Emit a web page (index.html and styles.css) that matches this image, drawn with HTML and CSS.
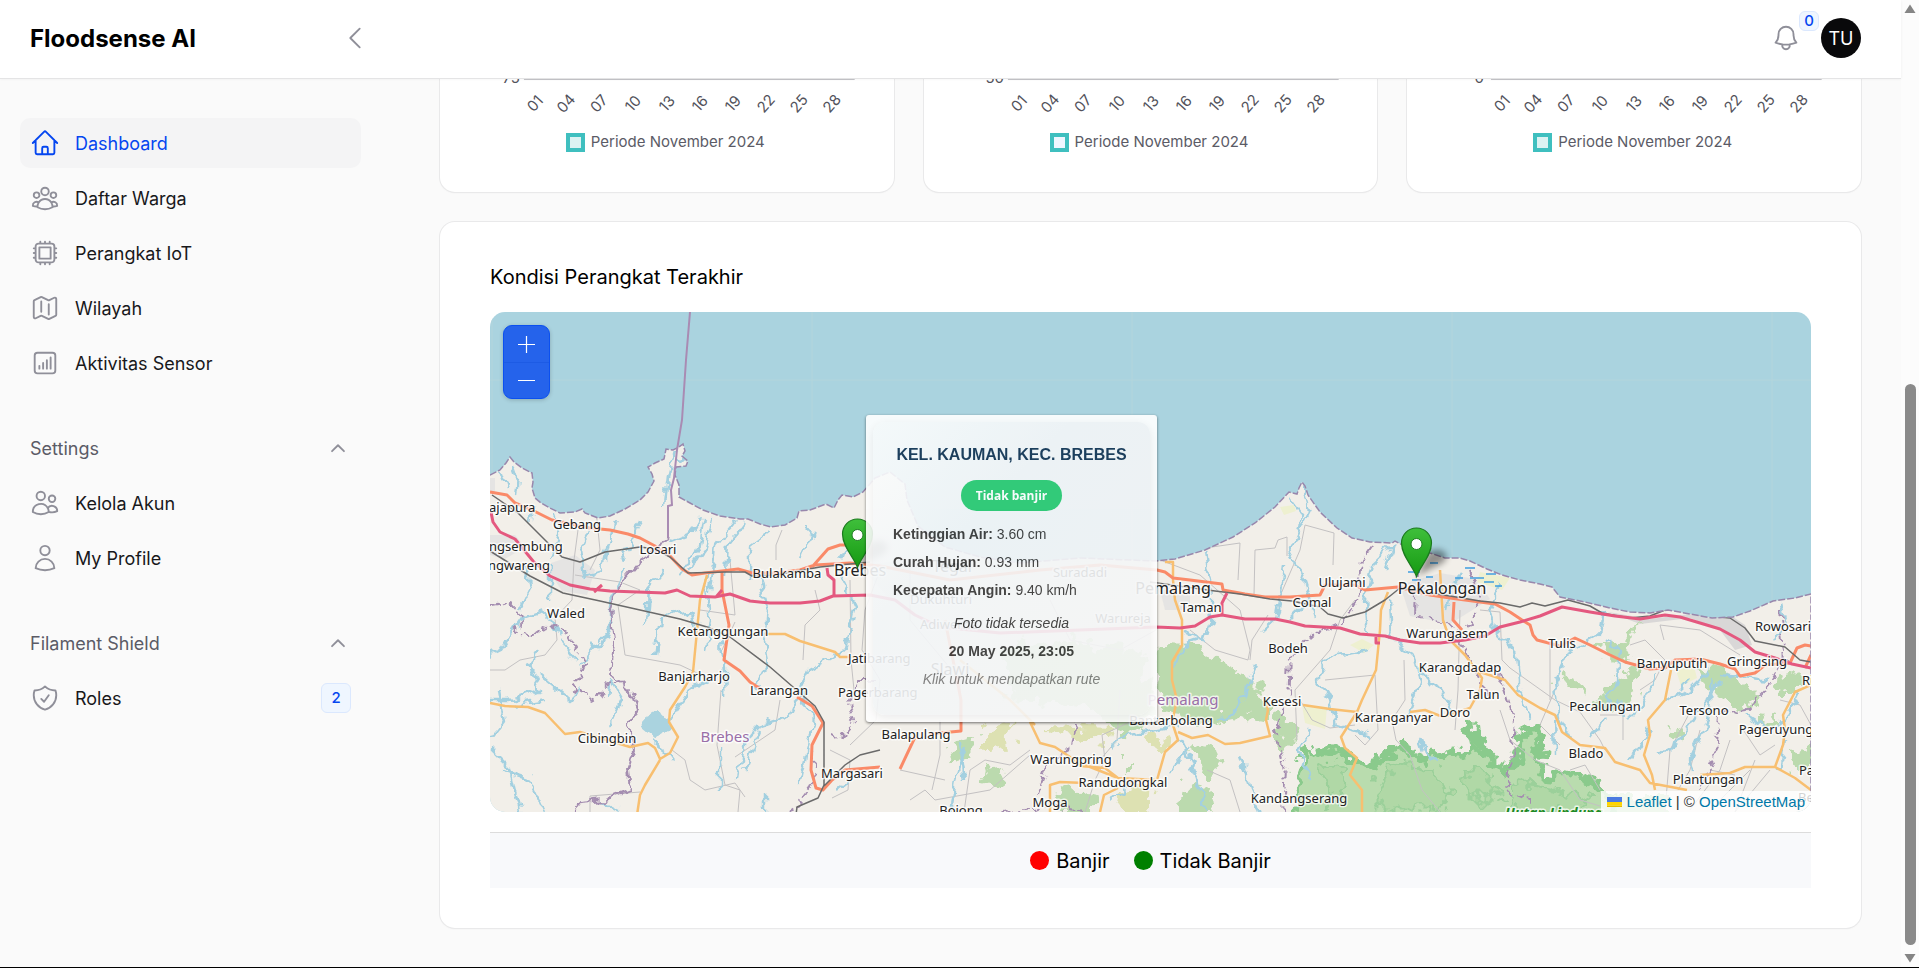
FILE: index.html
```html
<!DOCTYPE html>
<html lang="id">
<head>
<meta charset="utf-8">
<title>Dashboard - Floodsense AI</title>
<link rel="stylesheet" href="styles.css">
</head>
<body>
<svg class="defs" aria-hidden="true">
  <symbol id="i-home" viewBox="0 0 24 24"><path d="m2.25 12 8.954-8.955c.44-.439 1.152-.439 1.591 0L21.75 12M4.5 9.75v10.125c0 .621.504 1.125 1.125 1.125H9.75v-4.875c0-.621.504-1.125 1.125-1.125h2.25c.621 0 1.125.504 1.125 1.125V21h4.125c.621 0 1.125-.504 1.125-1.125V9.75M8.25 21h8.25"/></symbol>
  <symbol id="i-group" viewBox="0 0 24 24"><path d="M18 18.72a9.094 9.094 0 0 0 3.741-.479 3 3 0 0 0-4.682-2.72m.94 3.198.001.031c0 .225-.012.447-.037.666A11.944 11.944 0 0 1 12 21c-2.17 0-4.207-.576-5.963-1.584A6.062 6.062 0 0 1 6 18.719m12 0a5.971 5.971 0 0 0-.941-3.197m0 0A5.995 5.995 0 0 0 12 12.75a5.995 5.995 0 0 0-5.058 2.772m0 0a3 3 0 0 0-4.681 2.72 8.986 8.986 0 0 0 3.74.477m.94-3.197a5.971 5.971 0 0 0-.94 3.197M15 6.75a3 3 0 1 1-6 0 3 3 0 0 1 6 0Zm6 3a2.25 2.25 0 1 1-4.5 0 2.25 2.25 0 0 1 4.5 0Zm-13.5 0a2.25 2.25 0 1 1-4.5 0 2.25 2.25 0 0 1 4.5 0Z"/></symbol>
  <symbol id="i-cpu" viewBox="0 0 24 24"><path d="M8.25 3v1.5M4.5 8.25H3m18 0h-1.5M4.5 12H3m18 0h-1.5m-15 3.75H3m18 0h-1.5M8.25 19.5V21M12 3v1.5m0 15V21m3.75-18v1.5m0 15V21m-9-1.5h10.5a2.25 2.25 0 0 0 2.25-2.25V6.75a2.25 2.25 0 0 0-2.25-2.25H6.75A2.25 2.25 0 0 0 4.5 6.75v10.5a2.25 2.25 0 0 0 2.25 2.25Zm.75-12h9v9h-9v-9Z"/></symbol>
  <symbol id="i-map" viewBox="0 0 24 24"><path d="M9 6.75V15m6-6v8.25m.503 3.498 4.875-2.437c.381-.19.622-.58.622-1.006V4.82c0-.836-.88-1.38-1.628-1.006l-3.869 1.934c-.317.159-.69.159-1.006 0L9.503 3.252a1.125 1.125 0 0 0-1.006 0L3.622 5.689C3.24 5.88 3 6.27 3 6.695V19.18c0 .836.88 1.38 1.628 1.006l3.869-1.934c.317-.159.69-.159 1.006 0l4.994 2.497c.317.158.69.158 1.006 0Z"/></symbol>
  <symbol id="i-chart" viewBox="0 0 24 24"><path d="M7.5 14.25v2.25m3-4.5v4.5m3-6.75v6.75m3-9v9M6 20.25h12A2.25 2.25 0 0 0 20.25 18V6A2.25 2.25 0 0 0 18 3.75H6A2.25 2.25 0 0 0 3.75 6v12A2.25 2.25 0 0 0 6 20.25Z"/></symbol>
  <symbol id="i-users" viewBox="0 0 24 24"><path d="M15 19.128a9.38 9.38 0 0 0 2.625.372 9.337 9.337 0 0 0 4.121-.952 4.125 4.125 0 0 0-7.533-2.493M15 19.128v-.003c0-1.113-.285-2.16-.786-3.07M15 19.128v.106A12.318 12.318 0 0 1 8.624 21c-2.331 0-4.512-.645-6.374-1.766l-.001-.109a6.375 6.375 0 0 1 11.964-3.07M12 6.375a3.375 3.375 0 1 1-6.75 0 3.375 3.375 0 0 1 6.75 0Zm8.25 2.25a2.625 2.625 0 1 1-5.25 0 2.625 2.625 0 0 1 5.25 0Z"/></symbol>
  <symbol id="i-user" viewBox="0 0 24 24"><path d="M15.75 6a3.75 3.75 0 1 1-7.5 0 3.75 3.75 0 0 1 7.5 0ZM4.501 20.118a7.5 7.5 0 0 1 14.998 0A17.933 17.933 0 0 1 12 21.75c-2.676 0-5.216-.584-7.499-1.632Z"/></symbol>
  <symbol id="i-shield" viewBox="0 0 24 24"><path d="M9 12.75 11.25 15 15 9.75m-3-7.036A11.959 11.959 0 0 1 3.598 6 11.99 11.99 0 0 0 3 9.749c0 5.592 3.824 10.29 9 11.623 5.176-1.332 9-6.03 9-11.622 0-1.31-.21-2.571-.598-3.751h-.152c-3.196 0-6.1-1.248-8.25-3.285Z"/></symbol>
  <symbol id="i-bell" viewBox="0 0 24 24"><path d="M14.857 17.082a23.848 23.848 0 0 0 5.454-1.31A8.967 8.967 0 0 1 18 9.75V9A6 6 0 0 0 6 9v.75a8.967 8.967 0 0 1-2.312 6.022c1.733.64 3.56 1.085 5.455 1.31m5.714 0a24.255 24.255 0 0 1-5.714 0m5.714 0a3 3 0 1 1-5.714 0"/></symbol>
  <symbol id="i-left" viewBox="0 0 24 24"><path d="M15.75 19.5 8.25 12l7.5-7.5"/></symbol>
  <symbol id="i-up" viewBox="0 0 24 24"><path d="m5.5 15.5 6.5-6.5 6.5 6.5"/></symbol>
  <symbol id="axis" viewBox="0 0 454 48" overflow="hidden">
    <path d="M84 .5H415" stroke="#c4c4c8"/>
    <g class="axis-text" text-anchor="middle">
      <text transform="translate(99 28) rotate(-48)">01</text>
      <text transform="translate(130 28) rotate(-48)">04</text>
      <text transform="translate(163 28) rotate(-48)">07</text>
      <text transform="translate(197 28) rotate(-48)">10</text>
      <text transform="translate(231 28) rotate(-48)">13</text>
      <text transform="translate(264 28) rotate(-48)">16</text>
      <text transform="translate(297 28) rotate(-48)">19</text>
      <text transform="translate(330 28) rotate(-48)">22</text>
      <text transform="translate(363 28) rotate(-48)">25</text>
      <text transform="translate(396 28) rotate(-48)">28</text>
    </g>
  </symbol>
  <linearGradient id="pin-fill" x1="0" y1="0" x2="0" y2="1"><stop offset="0" stop-color="#3fbf3b"/><stop offset="1" stop-color="#169a12"/></linearGradient>
  <filter id="soft" x="-50%" y="-50%" width="200%" height="200%"><feGaussianBlur stdDeviation="3"/></filter>
  <symbol id="pin" viewBox="0 0 60 52" overflow="visible">
    <path d="M17 49 28 25q12-6 18 2 3 8-12 13Z" fill="#000" opacity=".4" filter="url(#soft)"/>
    <path d="M16.500 49.500C13.500 40 1.500 29 1.500 16a14.500 14.500 0 0 1 30 0c0 13-12 24-15 33.500Z" fill="url(#pin-fill)" stroke="#1b7a1e" stroke-width="1.200"/>
    <circle cx="16.500" cy="17" r="5.500" fill="#fff" stroke="#1f7d22"/>
  </symbol>
</svg>

<div class="window">
  <div class="page">
    <header class="topbar">
      <div class="brand-area">
        <a class="brand" href="#">Floodsense AI</a>
        <button class="icon-button" type="button" aria-label="Tutup sidebar"><svg class="icon"><use href="#i-left"/></svg></button>
      </div>
      <div class="user-area">
        <button class="icon-button bell" type="button" aria-label="Notifikasi"><svg class="icon"><use href="#i-bell"/></svg><span class="count">0</span></button>
        <button class="avatar" type="button">TU</button>
      </div>
    </header>

    <div class="body">
      <nav class="sidebar">
        <ul class="group">
          <li><a class="item active" href="#"><svg class="icon"><use href="#i-home"/></svg>Dashboard</a></li>
          <li><a class="item" href="#"><svg class="icon"><use href="#i-group"/></svg>Daftar Warga</a></li>
          <li><a class="item" href="#"><svg class="icon"><use href="#i-cpu"/></svg>Perangkat IoT</a></li>
          <li><a class="item" href="#"><svg class="icon"><use href="#i-map"/></svg>Wilayah</a></li>
          <li><a class="item" href="#"><svg class="icon"><use href="#i-chart"/></svg>Aktivitas Sensor</a></li>
        </ul>
        <ul class="group">
          <li><button class="group-head" type="button">Settings<svg class="icon small"><use href="#i-up"/></svg></button></li>
          <li><a class="item" href="#"><svg class="icon"><use href="#i-users"/></svg>Kelola Akun</a></li>
          <li><a class="item" href="#"><svg class="icon"><use href="#i-user"/></svg>My Profile</a></li>
        </ul>
        <ul class="group">
          <li><button class="group-head" type="button">Filament Shield<svg class="icon small"><use href="#i-up"/></svg></button></li>
          <li><a class="item" href="#"><svg class="icon"><use href="#i-shield"/></svg>Roles<span class="item-badge">2</span></a></li>
        </ul>
      </nav>

      <main class="main">
        <div class="charts">
          <section class="card chart">
            <svg class="axis" viewBox="0 0 454 48"><use href="#axis"/><text class="axis-text" x="80" y="4" text-anchor="end">75</text></svg>
            <p class="series"><span class="swatch"></span>Periode November 2024</p>
          </section>
          <section class="card chart">
            <svg class="axis" viewBox="0 0 454 48"><use href="#axis"/><text class="axis-text" x="80" y="4" text-anchor="end">50</text></svg>
            <p class="series"><span class="swatch pale"></span>Periode November 2024</p>
          </section>
          <section class="card chart">
            <svg class="axis" viewBox="0 0 454 48"><use href="#axis"/><text class="axis-text" x="77" y="4" text-anchor="end">0</text></svg>
            <p class="series"><span class="swatch"></span>Periode November 2024</p>
          </section>
        </div>

        <section class="card map-card">
          <h2 class="map-title">Kondisi Perangkat Terakhir</h2>
          <div class="map">
            <svg class="map-canvas" viewBox="490 312 1321 500" preserveAspectRatio="xMidYMid slice" role="img" aria-label="Peta pantai utara Jawa Tengah">
              <defs>
                <filter id="wiggle" filterUnits="userSpaceOnUse" x="480" y="300" width="1345" height="525"><feTurbulence type="fractalNoise" baseFrequency=".09" numOctaves="2" seed="4"/><feDisplacementMap in="SourceGraphic" scale="13" xChannelSelector="R" yChannelSelector="G"/></filter>
                <filter id="ragged" filterUnits="userSpaceOnUse" x="480" y="300" width="1345" height="535"><feTurbulence type="fractalNoise" baseFrequency=".07" numOctaves="3" seed="9"/><feDisplacementMap in="SourceGraphic" scale="30" xChannelSelector="R" yChannelSelector="G"/></filter>
                <path id="land" d="M490 475 500 470 506 463 510 457 514 462 522 468 532 473 533 482 532 488 535 498 541 503 550 508 560 513 575 512 582 509 585 513 598 518 610 516 625 509 640 500 648 492 654 481 652 474 648 467 655 463 664 459 666 449 673 450 679 447 683 444 685 451 682 456 688 461 686 466 676 467 675 475 679 485 679 497 690 503 703 510 720 516 740 519 748 519 760 524 771 527 785 525 797 518 799 511 810 510 826 504 834 508 838 500 842 495 853 497 863 492 875 478 890 472 905 484 907 500 918 526 945 547 980 557 1020 563 1080 558 1156 561 1175 559 1205 550 1233 537 1255 523 1275 507 1289 492 1297 494 1299 488 1302 482 1305 486 1308 495 1320 512 1337 528 1352 538 1370 542 1392 543 1395 541 1410 549 1430 553 1445 558 1460 558 1470 561 1487 569 1502 575 1520 580 1540 584 1552 587 1560 597 1585 602 1610 608 1630 612 1650 613 1668 610 1690 614 1712 618 1733 617 1750 611 1773 601 1795 598 1811 594V830H480V475Z"/>
                <clipPath id="on-land"><use href="#land"/></clipPath>
              </defs>
              <path class="sea" d="M480 300h1350v530H480z"/>
              <path class="tile" d="M492 312V500M812 312V520M1132 312V560M1452 312V560M1772 312V600M490 380H1811"/>
              <use href="#land" class="land"/>
              <g clip-path="url(#on-land)">
                <path class="built" d="M490 478h5v16h-5zM545 565l30-10 20 15-8 25-25-4zM490 535h25l10 12-20 12-15-4zM860 565l50-5 20 20-40 20zM1160 590h30v20h-25zM1400 585l40-12 35 6 15 20-40 25-40-8z"/>
                <path class="industry" d="M1608 612 1650 619 1690 614 1733 617 1745 625 1752 645 1735 650 1720 630 1690 618 1640 624Z"/>
                <path class="sand" d="M1280 507l14-2 2 6-12 4zM1302 705l25 2-2 22-20-6zM1350 645l12-6 12 6-10 8zM1676 670l18-4 3 12-16 8zM1480 572l30 6-8 12-25-8z"/>
                <g class="wood" filter="url(#ragged)">
                  <path d="M1160 644 1198 645 1215 660 1250 678 1268 696 1268 722 1235 718 1195 722 1165 705 1155 680Z"/>
                  <path d="M1275 715 1300 727 1296 742 1286 752 1278 735ZM1180 790 1210 782 1215 815H1175ZM1192 748 1215 752 1220 772 1205 768ZM1056 790 1085 786 1100 797 1090 815H1060ZM952 742 975 736 970 758 955 762ZM985 768 1000 765 1005 795 990 790ZM1122 762h12v14h-12z"/>
                  <path d="M1600 645 1625 640 1640 620 1632 645 1625 662 1608 660ZM1605 685 1640 665 1635 700 1610 710 1588 705 1602 695ZM1560 678 1575 675 1585 695 1565 690ZM1695 665 1720 668 1750 690 1760 700 1735 710 1715 690ZM1775 680 1800 672V690H1780ZM1760 715 1780 718V730L1760 722ZM1790 750 1811 745V770H1795ZM1668 730l14-3-4 15zM1608 795h60v22h-60z"/>
                  <path d="M1000 650 1060 640 1140 650 1157 720 1130 735 1080 705 1010 700Z"/>
                </g>
                <path class="scrub" filter="url(#ragged)" d="M985 730 1010 722 1012 745 985 748ZM1045 725 1115 727 1110 740 1060 738ZM1122 790 1150 782 1148 815H1120ZM1150 740 1172 735 1170 748 1152 748Z"/>
                <g filter="url(#ragged)">
                  <path class="forest" d="M1304 750 1318 755 1335 750 1350 758 1366 764 1388 758 1398 746 1412 754 1430 758 1452 754 1466 750 1482 752 1496 760 1504 768 1518 758 1524 728 1534 728 1542 748 1540 772 1566 774 1590 784 1614 796 1618 830H1300L1298 780Z"/>
                  <path class="forest-core" d="M1320 766 1340 762 1352 784 1335 806ZM1380 778 1400 764 1430 770 1450 790 1440 812 1380 812ZM1462 770 1490 776 1500 800 1470 800ZM1512 785 1550 788 1590 800 1560 815 1510 812Z"/>
                  <path class="forest" d="M1462 724 1478 738 1490 752 1478 750Z"/>
                </g>
                <g class="minor">
                  <path d="M490 670 505 670 520 660 545 655 557 640 555 618 572 600 574 560 578 530M596 510 600 550 590 570M575 575 620 582 640 590 618 605 625 655 680 665 712 680M721 690 717 745 725 785 740 790 738 812M672 750 685 760 690 780 705 790 735 783 745 797M590 812V796L640 792M735 622 722 650M850 580 851 660 855 700M830 750 850 760 848 790 832 798M780 700 775 730 735 757M803 660 805 625 820 610 815 590M700 610 735 615 730 560M776 560V545L782 530M880 570 865 610 862 650 880 680 876 720 850 745M910 560V620L960 680V720M1050 600 1070 640 1120 650 1156 630"/>
                  <path d="M1205 548 1240 543 1238 580M1254 595 1255 550 1275 548 1278 540 1287 537V556M1280 596 1300 550 1305 525 1334 533 1333 565M1160 560 1200 575 1240 610 1250 650 1248 660 1215 650 1190 630M1250 660 1252 640 1268 615M1297 740 1295 690 1330 650 1340 620 1355 600M1325 680 1375 675 1378 730 1365 745 1355 735M1404 660 1405 700 1392 720 1396 740 1410 755 1422 790 1440 812M1460 610 1458 690 1455 730M1300 700 1312 720 1330 728 1355 725M1207 770 1230 780 1240 812M1085 812 1095 780 1105 760 1102 735 1130 722M940 720V755L932 790M900 770 945 780M964 812 970 770 985 760 1010 765 1030 750M910 800 925 790 935 800 990 790 1030 755M1120 690 1117 740 1100 760"/>
                  <path d="M1480 610 1500 612 1502 660 1510 668 1555 700 1580 712 1600 740 1605 750M1550 640V700M1600 715H1623V740M1500 710 1510 740 1535 760 1560 770 1580 800 1600 806M1664 640 1660 625 1700 630 1740 655M1630 645 1645 640 1665 660 1655 680 1640 690M1690 712 1670 750 1665 812M1700 730 1690 770 1678 790M1730 740 1720 770 1690 810M1755 760 1735 812M1780 700 1800 705 1811 725M1740 725 1760 755 1775 745M1710 770 1735 775M1720 800 1750 770M1735 812 1770 770M1570 770 1585 765 1600 790M1555 690 1540 725 1560 745"/>
                </g>
                <g class="river" filter="url(#wiggle)">
                  <path d="M513 465 518 480 516 495M500 470 507 490M535 505 530 525M551 560 560 530 555 515M585 580 580 550 590 530M605 560 615 520M640 520 632 545 620 560M674 452 668 475 665 505M679 458 689 462M703 515 695 530 670 540M705 518 700 545 680 575M712 520 705 550 690 570M745 522 728 545 726 575M735 520 715 545 710 590M770 530 750 545 750 580M815 530 805 545 800 560M804 525 815 537M850 545 840 560M606 545 600 570 585 575"/>
                  <path d="M520 610 530 590 526 565M550 565V600M560 635 545 612 520 620 500 650 490 655M625 570 610 600 610 630 580 665M590 640 600 650 615 620M665 570 648 590 646 625M700 625 680 610 660 620 655 655M705 575 710 620 706 650M760 575 768 610 765 640 768 665 755 690M720 635 725 670 724 695M710 680 690 690 670 720M840 575 855 605 845 650 810 670 800 690 790 715 760 725 745 740 738 780M800 690 815 720 808 740 805 760 800 785M500 760 490 750 510 770 520 812M540 650 530 665 540 690 510 700 490 700M540 675 570 700 580 690M560 640 575 660M500 690 505 720 490 740M607 695 610 680 622 700 610 725M545 700 515 705M500 770 530 780 545 812M600 800 620 810M720 745V790M760 730 745 770M838 790 850 780M765 795V812M652 740 665 750 672 760"/>
                  <path d="M1290 497 1302 513 1300 530 1288 560 1300 570 1310 600 1315 615M1303 485 1310 510 1300 530M1205 552 1210 580 1212 620 1205 640 1180 630M1283 565 1280 595 1275 620 1262 632M1394 545 1372 565 1365 600 1368 635M1393 545 1385 570M1390 630 1405 650 1415 655 1420 680 1410 710 1400 722M1420 670 1440 690 1456 715M1170 670 1185 645 1200 640M1370 650 1340 655 1325 660 1318 680 1330 700 1335 725 1370 735M1310 600 1290 620M1256 665 1245 690 1238 710 1215 720M1310 730 1300 750 1310 780M1420 740 1425 755 1440 760M1460 575 1450 590 1447 610M1500 580 1490 610 1495 630 1515 650 1520 690 1530 720M1390 600 1392 640M1180 740 1190 760 1200 790 1205 812M1240 755 1248 780 1258 812M950 812 955 780 965 745M1112 745 1130 735 1180 725M1170 775 1175 765 1190 748M960 740 965 780M1110 800 1130 785"/>
                  <path d="M1604 610 1600 635 1570 650 1555 680 1560 720 1570 740M1605 640 1620 650 1618 680 1605 710M1655 675 1640 710 1630 720M1650 730 1630 760M1620 700 1625 720M1555 720 1556 755M1720 680 1700 710 1680 740 1660 755M1712 680 1708 720 1690 760 1692 770M1720 675 1770 680M1690 680 1680 690M1780 605 1785 625 1775 640M1800 690 1785 720 1770 730 1745 715M1785 740 1780 770M1665 700 1690 690 1710 670M1590 740 1605 720"/>
                </g>
                <path class="lake" filter="url(#wiggle)" d="M642 718 655 711 672 718 667 730 655 738 643 728Z"/>
                <path class="swamp" d="M1408 572h12M1430 563h8M1442 556h6M1465 568h10M1455 578h8M1470 578h14M1412 580h9M1486 574h10M1484 582h10M1495 586h7M1426 577h7"/>
                <g class="border" filter="url(#wiggle)">
                  <path d="M668 538 660 543 650 556 640 562 625 580 615 590 610 610 615 640 612 675 630 690 637 710 628 725 635 750 628 770 630 790 605 800 580 802 570 815"/>
                  <path d="M490 605 510 602 525 620 515 630 530 638 550 625 570 635 585 665 575 690 595 700 605 685 620 680" stroke-dasharray="8 3"/>
                  <path d="M877 680 860 680 850 700 855 720 840 738 830 735M812 750 815 780 800 800 790 812M1370 548 1362 560 1358 600 1345 620 1310 635 1290 660 1288 700 1275 730 1285 770 1282 812M1418 570 1416 615 1440 620 1460 640 1480 680 1490 700M1500 675 1515 720 1512 760 1505 790 1530 800 1530 815M1780 610 1785 660 1770 685 1745 710 1718 715 1715 760 1700 790M1085 812 1050 805 1000 815M1075 725 1070 750 1050 760 1035 800M1470 570 1480 600 1465 630" stroke-dasharray="8 3"/>
                </g>
                <g class="secondary">
                  <path d="M490 703 505 706 528 707 545 713 565 734 580 732 630 747 648 743 655 748 660 759 670 753 678 737 669 722 670 710 685 687 693 672 700 600 707 575M660 760 645 785 640 795 637 815M765 634 785 634 800 641 835 652 840 657 855 657M1165 562H1173V580L1175 600 1182 620 1182 645 1172 662 1172 680 1177 700 1172 722 1178 740 1165 752 1157 780 1118 778 1085 765M1178 732 1192 738 1208 735 1225 744 1240 743 1270 736 1266 720 1268 710 1265 700M1303 705 1330 709 1357 712 1362 700 1376 670 1380 630 1381 610 1388 592M1357 712 1341 737 1345 748 1357 758 1350 775 1362 790 1362 815M1410 712 1425 710 1443 717 1470 708 1480 690 1482 678 1465 655 1450 640 1443 620 1440 570M1480 672 1505 680 1518 695 1540 708 1555 715 1562 732 1580 745 1605 748 1615 762 1640 770 1650 783 1687 790M1655 790 1652 775 1644 755 1650 735 1648 720 1665 700 1671 670M1700 775 1730 773 1745 767 1775 767 1783 745 1785 730 1783 715 1795 692 1811 685M1775 767 1795 778 1811 790M1050 815V785L1060 782 1085 783M1100 812 1104 795 1118 788M1030 722 1040 743 1055 747 1070 757 1080 766 1105 768 1118 778M960 660 1010 700 1035 725"/>
                </g>
                <g class="trunk">
                  <path d="M490 492 507 495 515 503 532 510 552 520 590 528 610 530 628 534 640 538 655 546 670 556 682 569 692 575 705 573 722 571 738 569 752 573 775 573 800 570 815 565 850 563 880 566M812 567 820 558 828 549 840 545 850 545M722 572V590L729 625 724 660 740 671 750 682 762 690M797 697 812 706 823 723 812 745 811 770 816 788 823 790 832 780 845 770 880 767M900 769 916 735M930 734 961 731V700L945 620M880 566 950 580 1040 570 1100 565 1157 570 1165 572 1173 578 1190 580 1222 584 1223 590 1245 594 1265 597 1290 597 1320 595 1325 585 1355 585 1365 590 1398 587 1430 595 1450 598 1480 602 1495 604 1510 612 1522 620 1530 625 1533 635 1537 640 1560 646 1575 638 1590 645 1610 655 1625 662 1650 669 1665 668 1675 660 1700 659 1720 664 1735 669 1740 676 1755 673 1765 665 1790 663 1797 648 1805 645 1811 646M1805 668 1811 655M1454 602 1453 620 1462 630"/>
                </g>
                <g class="rail">
                  <path d="M492 495 518 513 545 540 562 557 580 562 605 552 640 547 655 549 670 557 688 573 725 572 745 572 752 576 775 575 820 567 870 562M490 551 530 576 563 593 600 601 640 610 680 619 707 627 730 637 770 667 815 706 824 722V785L818 798 797 807 796 815M824 786 845 765 860 755 880 750M1150 582 1215 591 1240 594 1270 599 1292 601 1320 607 1328 614 1343 618 1365 612 1385 600 1400 588 1450 596 1480 601 1500 603 1520 607 1532 603 1545 606 1568 600 1590 606 1602 613 1630 618 1650 616 1670 608 1700 615 1730 618 1745 628 1755 641 1785 647 1800 660 1811 662"/>
                </g>
                <g class="motorway">
                  <path d="M491 512 493 522 500 532 515 539 533 561 550 576 570 585 590 589 610 591 665 593 677 590 690 596 715 597 730 594 750 601 770 603 800 603 820 601 833 596 870 595 895 600 915 615 940 627 1000 633 1080 630 1156 627 1180 628 1195 626 1210 617 1222 615 1245 619 1275 619 1290 622 1305 626 1340 628 1360 634 1385 636 1400 640 1420 643 1440 643 1465 640 1485 636 1500 627 1520 622 1540 616 1562 607 1590 612 1615 616 1640 619 1665 615 1680 617 1700 623 1720 629 1740 640 1755 652 1775 658 1792 664 1811 668M827 568 828 575 834 580V595M594 592 602 585M716 597 722 590M1222 615V603L1227 593M1376 636V643H1380"/>
                </g>
              </g>
              <use href="#land" class="coast"/>
              <path class="sea-border" d="M690 312 686 360 682 420 677 450 674 478 671 490 672 505 668 506V538"/>
              <g class="label">
                <text x="489" y="512">ajapura</text><text x="489" y="551">ngsembung</text><text x="488" y="570">ngwareng</text>
                <g text-anchor="middle">
                  <text x="577" y="529">Gebang</text><text x="658" y="554">Losari</text><text x="787" y="578">Bulakamba</text><text x="566" y="618">Waled</text><text x="723" y="636">Ketanggungan</text><text x="694" y="681">Banjarharjo</text><text x="779" y="695">Larangan</text><text x="607" y="743">Cibingbin</text><text x="852" y="778">Margasari</text><text x="916" y="739">Balapulang</text><text x="1080" y="577">Suradadi</text><text x="941" y="604">Dukuhturi</text><text x="949" y="629">Adiwerna</text><text x="1123" y="623">Warureja</text><text x="1201" y="612">Taman</text><text x="1312" y="607">Comal</text><text x="1342" y="587">Ulujami</text><text x="1447" y="638">Warungasem</text><text x="1288" y="653">Bodeh</text><text x="1460" y="672">Karangdadap</text><text x="1483" y="699">Talun</text><text x="1282" y="706">Kesesi</text><text x="1394" y="722">Karanganyar</text><text x="1455" y="717">Doro</text><text x="1171" y="725">Bantarbolang</text><text x="1123" y="787">Randudongkal</text><text x="1071" y="764">Warungpring</text><text x="1050" y="807">Moga</text><text x="961" y="815">Bojong</text><text x="1299" y="803">Kandangserang</text><text x="1562" y="648">Tulis</text><text x="1672" y="668">Banyuputih</text><text x="1757" y="666">Gringsing</text><text x="1783" y="631">Rowosari</text><text x="1605" y="711">Pecalungan</text><text x="1704" y="715">Tersono</text><text x="1776" y="734">Pageruyung</text><text x="1586" y="758">Blado</text><text x="1708" y="784">Plantungan</text>
                </g>
                <text x="848" y="663">Jatibarang</text><text x="838" y="697">Pagerbarang</text><text x="1802" y="685">Ri</text><text x="1799" y="775">Pa</text><text x="1798" y="802">Be</text>
              </g>
              <g class="label city" text-anchor="middle"><text x="860" y="576">Brebes</text><text x="952" y="572">Tegal</text><text x="950" y="675">Slawi</text><text x="1173" y="594">Pemalang</text><text x="1442" y="594">Pekalongan</text></g>
              <g class="label regency" text-anchor="middle"><text x="725" y="742">Brebes</text><text x="1183" y="705">Pemalang</text></g>
              <text class="label reserve" x="1554" y="818" text-anchor="middle">Hutan Lindung</text>
              <use href="#pin" x="841" y="518" width="60" height="52"/>
              <use href="#pin" x="1400" y="527" width="60" height="52"/>
            </svg>

            <div class="zoom">
              <button type="button" aria-label="Perbesar"><svg viewBox="0 0 18 18"><path d="M9 0v18M0 9h18"/></svg></button>
              <button type="button" aria-label="Perkecil"><svg viewBox="0 0 18 18"><path d="M0 9h18"/></svg></button>
            </div>

            <div class="tooltip" role="tooltip">
              <div class="tooltip-body">
                <h3>KEL. KAUMAN, KEC. BREBES</h3>
                <span class="status">Tidak banjir</span>
                <dl>
                  <div><dt>Ketinggian Air:</dt> <dd>3.60 cm</dd></div>
                  <div><dt>Curah Hujan:</dt> <dd>0.93 mm</dd></div>
                  <div><dt>Kecepatan Angin:</dt> <dd>9.40 km/h</dd></div>
                </dl>
                <p class="photo">Foto tidak tersedia</p>
                <p class="time">20 May 2025, 23:05</p>
                <p class="hint">Klik untuk mendapatkan rute</p>
              </div>
            </div>

            <div class="attribution">
              <svg viewBox="0 0 12 8" aria-hidden="true"><path fill="#4C7BE1" d="M0 0h12v4H0z"/><path fill="#FFD500" d="M0 4h12v3H0z"/><path fill="#E0BC00" d="M0 7h12v1H0z"/></svg>
              <a href="#">Leaflet</a> | © <a href="#">OpenStreetMap</a>
            </div>
          </div>
          <div class="legend">
            <span class="legend-item"><span class="dot red"></span>Banjir</span>
            <span class="legend-item"><span class="dot green"></span>Tidak Banjir</span>
          </div>
        </section>
      </main>
    </div>
  </div>

  <div class="scrollbar" aria-hidden="true">
    <svg class="arrow" viewBox="0 0 12 9"><path d="M6 .5 11.500 9H.5Z"/></svg>
    <span class="thumb"></span>
    <svg class="arrow" viewBox="0 0 12 9"><path d="M.5 0h11L6 8.500Z"/></svg>
  </div>
</div>
</body>
</html>
```
FILE: styles.css
```css
* {
  box-sizing: border-box;
}

body {
  margin: 0;
  background: #fafafa;
  color: #000;
  font-family: Inter, "Liberation Sans", sans-serif;
  font-size: 17px;
}

button {
  border: 0;
  padding: 0;
  background: none;
  font: inherit;
  color: inherit;
}

a {
  color: inherit;
  text-decoration: none;
}

ul {
  list-style: none;
  margin: 0;
  padding: 0;
}

.defs {
  position: absolute;
  width: 0;
  height: 0;
}

.window {
  display: flex;
  min-height: 100vh;
  border-bottom: 1px solid #000;
}

.page {
  flex: 1;
  min-width: 0;
}

/* Top bar */
.topbar {
  display: flex;
  align-items: center;
  justify-content: space-between;
  height: 78px;
  padding: 0 40px 2px 30px;
  background: #fff;
  box-shadow: 0 1px 0 #e4e4e5, 0 1px 3px rgba(0, 0, 0, 0.06);
  position: relative;
  z-index: 2;
}

.brand-area {
  display: flex;
  align-items: center;
  justify-content: space-between;
  width: 340px;
}

.brand {
  font-size: 24px;
  font-weight: 700;
}

.icon-button {
  display: flex;
  color: #8f8f99;
}

.icon {
  flex: none;
  width: 30px;
  height: 30px;
  fill: none;
  stroke: currentColor;
  stroke-width: 1.5;
  stroke-linecap: round;
  stroke-linejoin: round;
}

.icon.small {
  width: 22px;
  height: 22px;
  stroke-width: 2;
}

.user-area {
  display: flex;
  align-items: center;
  gap: 20px;
}

.bell {
  position: relative;
}

.count {
  position: absolute;
  left: 28px;
  top: -12px;
  width: 20px;
  height: 20px;
  border: 1px solid #dbe8fe;
  border-radius: 6px;
  background: #eff6ff;
  color: #0546f0;
  font-size: 15px;
  font-weight: 500;
  line-height: 18px;
  text-align: center;
}

.avatar {
  width: 40px;
  height: 40px;
  border-radius: 50%;
  background: #09090b;
  color: #fff;
  font-size: 18px;
}

/* Sidebar */
.body {
  display: flex;
}

.sidebar {
  display: flex;
  flex-direction: column;
  gap: 35px;
  flex: none;
  width: 400px;
  padding: 40px 39px 40px 20px;
}

.group {
  display: flex;
  flex-direction: column;
  gap: 5px;
}

.item {
  display: flex;
  align-items: center;
  gap: 15px;
  height: 50px;
  padding: 0 10px;
  border-radius: 10px;
  color: #18181b;
  font-size: 18px;
}

.item .icon {
  color: #8f8f99;
}

.item.active,
.item.active .icon {
  color: #0546f0;
}

.item.active {
  background: #f4f4f5;
}

.item-badge {
  width: 30px;
  height: 30px;
  margin-left: auto;
  border: 1px solid #dbe8fe;
  border-radius: 6px;
  background: #eff6ff;
  color: #0546f0;
  font-size: 15px;
  font-weight: 500;
  line-height: 28px;
  text-align: center;
}

.group-head {
  display: flex;
  align-items: center;
  justify-content: space-between;
  width: 100%;
  height: 50px;
  padding: 0 12px 0 10px;
  color: #5b5b66;
  font-size: 18px;
}

.group-head .icon {
  color: #8f8f99;
}

/* Content */
.main {
  flex: 1;
  min-width: 0;
  padding: 0 40px 38px;
}

.card {
  background: #fff;
  border-radius: 15px;
  box-shadow: 0 0 0 1px #e9e9ea, 0 1px 2px rgba(0, 0, 0, 0.06);
}

.charts {
  display: grid;
  grid-template-columns: repeat(3, 1fr);
  gap: 30px;
  margin-bottom: 30px;
}

.chart {
  border-radius: 0 0 15px 15px;
  padding-bottom: 38px;
}

.axis {
  display: block;
  width: 100%;
  height: 48px;
  margin-top: 1px;
}

.axis-text {
  fill: #52525b;
  font-size: 15px;
}

.series {
  display: flex;
  align-items: center;
  justify-content: center;
  gap: 6px;
  margin: 0;
  padding: 3px 3px 0 0;
  color: #5b5b66;
  font-size: 15px;
  line-height: 24px;
}

.swatch {
  width: 19px;
  height: 19px;
  border: 4px solid #3fbfbf;
  background: #dbf2f2;
}

.swatch.pale {
  background: #eff6ff;
}

.map-card {
  padding: 40px 50px;
}

.map-title {
  margin: 0 0 20px;
  font-size: 20px;
  font-weight: 400;
  line-height: 30px;
}

.map {
  position: relative;
  height: 500px;
  border-radius: 15px;
  overflow: hidden;
  font-family: "Liberation Sans", Arial, sans-serif;
}

.map-canvas {
  display: block;
  width: 100%;
  height: 100%;
}

.sea { fill: #aad3df; }
.tile { stroke: #b3d5dc; fill: none; }
.land { fill: #f2efe9; }
.coast { fill: none; stroke: #9887ac; stroke-width: 1.5; stroke-dasharray: 7 2; }
.sea-border { fill: none; stroke: #a98bb3; stroke-width: 2; }
.built { fill: #e0dfdf; opacity: 0.7; }
.industry { fill: #d9d7d7; }
.sand { fill: #eef0d0; }
.wood { fill: #bbdaae; }
.scrub { fill: #dde1b2; }
.forest { fill: #b9dcae; stroke: #8aca8c; stroke-width: 7; }
.forest-core { fill: #b0d8a6; stroke: #9bd09a; stroke-width: 3; }
.lake { fill: #aad3df; }
.swamp { stroke: #3f9fe0; stroke-width: 1.5; }
.minor { fill: none; stroke: #c3c1c2; stroke-width: 1; stroke-linejoin: round; }
.river { fill: none; stroke: #a3d0e0; stroke-width: 2.5; stroke-linejoin: round; }
.border { fill: none; stroke: #a48db0; stroke-width: 2; }
.secondary { fill: none; stroke: #f8bf70; stroke-width: 2.5; stroke-linejoin: round; }
.trunk { fill: none; stroke: #fa8a68; stroke-width: 3; stroke-linejoin: round; }
.rail { fill: none; stroke: #6a6a6a; stroke-width: 1.5; stroke-linejoin: round; }
.motorway { fill: none; stroke: #e4587f; stroke-width: 3; stroke-linejoin: round; }

.label {
  fill: #222;
  stroke: rgba(255, 255, 255, 0.75);
  stroke-width: 3;
  stroke-linejoin: round;
  paint-order: stroke;
  font-family: "Noto Sans", sans-serif;
  font-size: 13px;
}

.label.city { font-size: 16px; }
.label.regency { font-size: 15px; fill: #9a6fa8; }
.label.reserve { font-size: 14px; font-weight: 700; font-style: italic; fill: #1d8a24; }

.zoom {
  position: absolute;
  left: 13px;
  top: 13px;
  width: 47px;
  border: 1px solid #0b50f0;
  border-radius: 9px;
  background: #2563eb;
  overflow: hidden;
  box-shadow: 0 1px 4px rgba(0, 0, 0, 0.2);
}

.zoom button {
  display: flex;
  align-items: center;
  justify-content: center;
  width: 100%;
  height: 36px;
}

.zoom button + button {
  border-top: 1px solid #1d5be4;
}

.zoom svg {
  width: 17px;
  height: 17px;
  stroke: #fff;
  stroke-width: 1.3;
}

.tooltip {
  position: absolute;
  left: 376px;
  top: 103px;
  min-width: 291px;
  padding: 7px;
  border-radius: 3px;
  background: #fff;
  box-shadow: 0 1px 3px rgba(0, 0, 0, 0.6);
  opacity: 0.9;
  white-space: nowrap;
}

.tooltip-body {
  padding: 21px 20px 20px;
  border-radius: 12px;
  background: linear-gradient(135deg, #fcfdfd, #f3f6f8 35%, #f6f6f6);
  box-shadow: 0 3px 10px rgba(0, 0, 0, 0.08);
  color: #333;
  font-size: 14px;
  line-height: 20px;
  text-align: center;
}

.tooltip h3 {
  margin: 0 0 13px;
  color: #0d2f4f;
  font-size: 16px;
  line-height: 24px;
}

.status {
  display: inline-block;
  padding: 0 15px;
  border-radius: 16px;
  background: #25c96e;
  color: #fff;
  font-family: "Open Sans", sans-serif;
  font-size: 12px;
  font-weight: 700;
  line-height: 31px;
}

.tooltip dl {
  display: grid;
  gap: 8px;
  margin: 13px 0 13px;
  text-align: left;
}

.tooltip dt,
.tooltip dd {
  display: inline;
  margin: 0;
}

.tooltip dt,
.time {
  font-weight: 700;
}

.tooltip p {
  margin: 0 0 8px;
}

.photo,
.hint {
  font-style: italic;
}

.tooltip .hint {
  margin-bottom: 6px;
  color: #777;
}

.attribution {
  position: absolute;
  right: 0;
  bottom: 0;
  padding: 0 6px;
  background: rgba(255, 255, 255, 0.8);
  color: #333;
  font-size: 15px;
  line-height: 21px;
}

.attribution svg {
  width: 15px;
  height: 10px;
}

.attribution a {
  color: #0078a8;
}

.legend {
  display: flex;
  align-items: center;
  justify-content: center;
  gap: 24px;
  height: 56px;
  margin-top: 20px;
  border-top: 1px solid #dcdcdc;
  background: #f8f9fb;
  font-size: 20px;
}

.legend-item {
  display: flex;
  align-items: center;
  gap: 7px;
}

.dot {
  width: 19px;
  height: 19px;
  border-radius: 50%;
}

.dot.red { background: #f00; }
.dot.green { background: #008000; }

/* Window scroll bar */
.scrollbar {
  display: flex;
  flex-direction: column;
  align-items: center;
  flex: none;
  width: 18px;
  padding: 4px 0;
  background: #fcfcfc;
}

.arrow {
  width: 12px;
  height: 9px;
  fill: #858585;
}

.thumb {
  flex: 0 0 58.5%;
  width: 11px;
  margin: auto 0 9px;
  border-radius: 6px;
  background: #8a8a8a;
}
```
